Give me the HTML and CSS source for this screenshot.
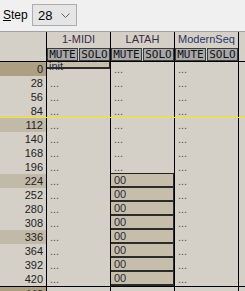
FILE: index.html
```html
<!DOCTYPE html>
<html lang="en">
<head>
    <meta charset="UTF-8">
    <title>Sequencer</title>
    <link rel="stylesheet" href="styles.css">
</head>
<body>
    <div class="toolbar">
        <span class="label"><u>S</u>tep</span>
        <div class="combo">
            <span>28</span>
            <svg width="9" height="5" viewBox="0 0 9 5"><polyline points="0.5,0.5 4.5,4.5 8.5,0.5" fill="none" stroke="#606060" stroke-width="1"/></svg>
        </div>
    </div>

    <div class="sheet">
        <div class="head">
            <div class="num"></div>
            <div class="track">
                <div class="name">1-MIDI</div>
                <div class="btns"><span>MUTE</span><span>SOLO</span></div>
            </div>
            <div class="track">
                <div class="name">LATAH</div>
                <div class="btns"><span>MUTE</span><span>SOLO</span></div>
            </div>
            <div class="track">
                <div class="name blue">ModernSeq</div>
                <div class="btns"><span>MUTE</span><span>SOLO</span></div>
            </div>
            <div class="rest"></div>
        </div>

        <div class="row"><div class="num bar">0</div><div class="cell"><div class="evt short">init</div></div><div class="cell">...</div><div class="cell">...</div><div class="rest"></div></div>
        <div class="row"><div class="num">28</div><div class="cell">...</div><div class="cell">...</div><div class="cell">...</div><div class="rest"></div></div>
        <div class="row"><div class="num">56</div><div class="cell">...</div><div class="cell">...</div><div class="cell">...</div><div class="rest"></div></div>
        <div class="row"><div class="num">84</div><div class="cell">...</div><div class="cell">...</div><div class="cell">...</div><div class="rest"></div></div>
        <div class="row"><div class="num beat">112</div><div class="cell">...</div><div class="cell">...</div><div class="cell">...</div><div class="rest"></div></div>
        <div class="row"><div class="num">140</div><div class="cell">...</div><div class="cell">...</div><div class="cell">...</div><div class="rest"></div></div>
        <div class="row"><div class="num">168</div><div class="cell">...</div><div class="cell">...</div><div class="cell">...</div><div class="rest"></div></div>
        <div class="row"><div class="num">196</div><div class="cell">...</div><div class="cell">...</div><div class="cell">...</div><div class="rest"></div></div>
        <div class="row"><div class="num beat">224</div><div class="cell">...</div><div class="cell full"><div class="evt first">00</div></div><div class="cell">...</div><div class="rest"></div></div>
        <div class="row"><div class="num">252</div><div class="cell">...</div><div class="cell full"><div class="evt">00</div></div><div class="cell">...</div><div class="rest"></div></div>
        <div class="row"><div class="num">280</div><div class="cell">...</div><div class="cell full"><div class="evt">00</div></div><div class="cell">...</div><div class="rest"></div></div>
        <div class="row"><div class="num">308</div><div class="cell">...</div><div class="cell full"><div class="evt">00</div></div><div class="cell">...</div><div class="rest"></div></div>
        <div class="row"><div class="num beat">336</div><div class="cell">...</div><div class="cell full"><div class="evt">00</div></div><div class="cell">...</div><div class="rest"></div></div>
        <div class="row"><div class="num">364</div><div class="cell">...</div><div class="cell full"><div class="evt">00</div></div><div class="cell">...</div><div class="rest"></div></div>
        <div class="row"><div class="num">392</div><div class="cell">...</div><div class="cell full"><div class="evt">00</div></div><div class="cell">...</div><div class="rest"></div></div>
        <div class="row"><div class="num">420</div><div class="cell">...</div><div class="cell full"><div class="evt">00</div></div><div class="cell">...</div><div class="rest"></div></div>
        <div class="row bar-row"><div class="num bar">448</div><div class="cell"></div><div class="cell"></div><div class="cell"></div><div class="rest"></div></div>
    </div>

    <!-- playhead -->
    <div class="playhead"></div>
</body>
</html>
```

FILE: styles.css
```css
* {
    box-sizing: border-box;
    margin: 0;
    padding: 0;
}

body {
    position: relative;
    width: 245px;
    height: 291px;
    overflow: hidden;
    background: #d4d0c8;
    font-family: "Liberation Sans", Arial, sans-serif;
    font-size: 11px;
    color: #222;
}

.toolbar {
    height: 32px;
    display: flex;
    align-items: center;
    padding: 0 0 1px 3px;
    background: #f0f0f0;
    border-bottom: 1px solid #a0a0a0;
    font-size: 12px;
    color: #000;
}

.label {
    width: 29px;
}

.combo {
    width: 45px;
    height: 22px;
    display: flex;
    align-items: center;
    justify-content: space-between;
    padding: 0 6px 0 5px;
    background: #e5e5e5;
    border: 1px solid #adadad;
    font-size: 13px;
}

.sheet {
    overflow: hidden;
}

.head {
    display: flex;
    height: 30px;
    border-bottom: 1px solid #000;
}

.num {
    width: 47px;
    flex: none;
    border-right: 1px solid #000;
    text-align: right;
    padding-right: 3px;
}

.track {
    width: 64px;
    flex: none;
    border-right: 1px solid #000;
}

.name {
    height: 16px;
    line-height: 15px;
    text-align: center;
    color: #3a2c40;
}

.name.blue {
    color: #2a3466;
}

.btns {
    display: flex;
    gap: 1px;
    height: 13px;
}

.btns span {
    width: 31px;
    background: #a8a8a8;
    border: 1px solid #3c3c3c;
    font-family: "DejaVu Sans Mono", monospace;
    font-size: 11px;
    line-height: 11px;
    text-align: center;
    color: #111;
}

.rest {
    flex: 1;
}

.row {
    display: flex;
    height: 14px;
    line-height: 14px;
}

.num.beat {
    background: #c2baa8;
}

.num.bar {
    background: #ad9f82;
}

.bar-row {
    border-top: 1px solid #000;
}

.cell {
    width: 64px;
    flex: none;
    border-right: 1px solid #000;
    padding-left: 3px;
    color: #505050;
}

.cell.full {
    padding-left: 0;
}

.evt {
    height: 14px;
    padding-left: 3px;
    background: #c6beaa;
    border-right: 1px solid #2b2b2b;
    border-bottom: 2px solid #2b2b2b;
    line-height: 12px;
    color: #2a2a3a;
}

.evt.first {
    box-shadow: 0 -1px 0 #222;
}

.evt.short {
    height: 7px;
    margin-left: -3px;
    padding-left: 2px;
    line-height: 9px;
}

.playhead {
    position: absolute;
    left: 0;
    right: 0;
    top: 117px;
    height: 1px;
    background: #ffe800;
}
```
